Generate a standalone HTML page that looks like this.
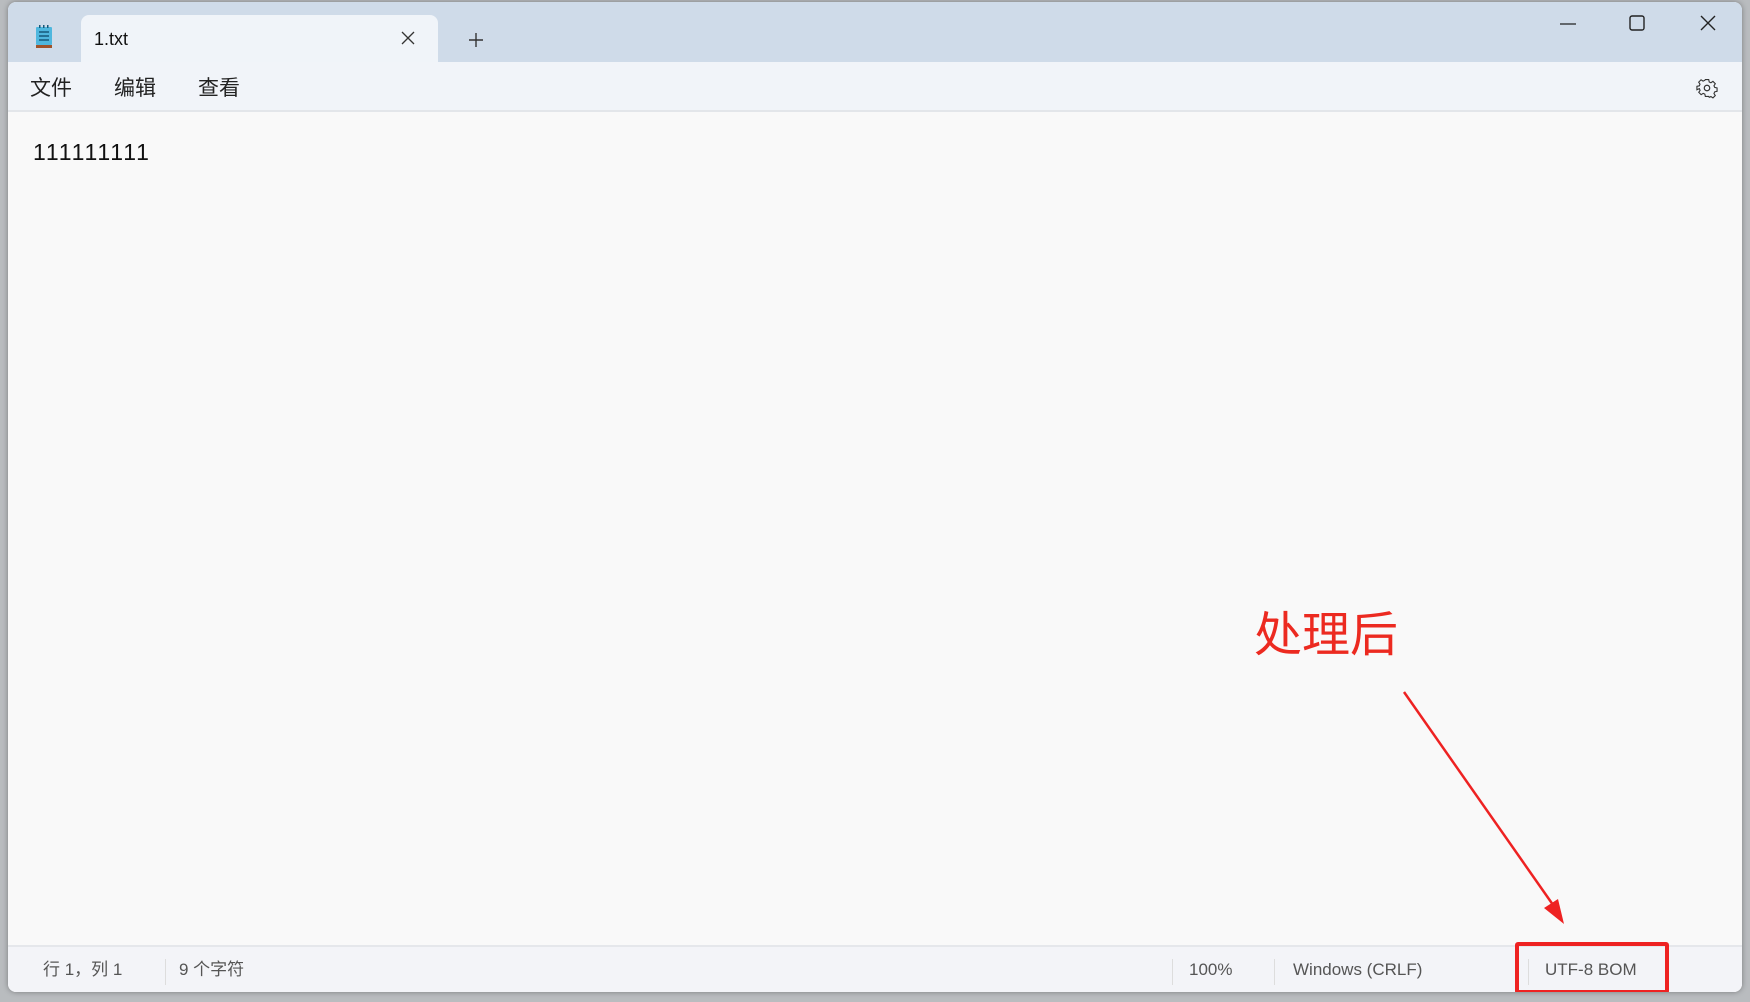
<!DOCTYPE html><html><head><meta charset="utf-8"><style>
body{margin:0;width:1750px;height:1002px;background:#b9bcbf;position:relative;overflow:hidden;font-family:"Segoe UI","Liberation Sans","Noto Sans CJK SC",sans-serif;}
.win{position:absolute;left:8px;top:2px;width:1734px;height:990px;background:#f9f9f9;border-radius:8px;overflow:hidden;box-shadow:0 0 6px rgba(0,0,0,.35);}
.title{position:absolute;left:0;top:0;width:100%;height:60px;background:#cfdbe9;}
.tab{position:absolute;left:73px;top:13px;width:357px;height:47px;background:#f0f4f9;border-radius:8px 8px 0 0;}
.menu{position:absolute;left:0;top:60px;width:100%;height:48px;background:#f1f4f9;border-bottom:2px solid #e3e6ea;}
.status{position:absolute;left:0;top:943px;width:100%;height:47px;background:#f3f4f8;border-top:2px solid #e5e7eb;color:#555;font-size:17px;}
.t{position:absolute;white-space:nowrap;line-height:24px;}
.sep{position:absolute;top:12px;width:1px;height:26px;background:#ddd;}
</style></head><body>
<div class="win">
<div class="title">
<svg style="position:absolute;left:26px;top:22px" width="20" height="26" viewBox="0 0 20 26"><rect x="2" y="3" width="16" height="18" rx="1" fill="#4fb7de"/><rect x="2" y="21" width="16" height="3" fill="#a0532a"/><g stroke="#175a7a" stroke-width="1.6"><line x1="5" y1="8" x2="15" y2="8"/><line x1="5" y1="12" x2="15" y2="12"/><line x1="5" y1="16" x2="15" y2="16"/></g><g fill="#175a7a"><rect x="5" y="1" width="1.5" height="3"/><rect x="9" y="1" width="1.5" height="3"/><rect x="13" y="1" width="1.5" height="3"/></g></svg>
<div class="tab"><div class="t" style="left:13px;top:12px;font-size:18px;color:#111">1.txt</div>
<svg style="position:absolute;left:320px;top:16px" width="14" height="14"><path d="M1 1L13 13M13 1L1 13" stroke="#333" stroke-width="1.3"/></svg></div>
<svg style="position:absolute;left:460px;top:30px" width="16" height="16"><path d="M8 1V15M1 8H15" stroke="#333" stroke-width="1.4"/></svg>
<svg style="position:absolute;left:1552px;top:20px" width="16" height="4"><path d="M0 2H16" stroke="#222" stroke-width="1.3"/></svg>
<svg style="position:absolute;left:1621px;top:13px" width="16" height="16"><rect x="1" y="1" width="14" height="14" rx="2" fill="none" stroke="#222" stroke-width="1.4"/></svg>
<svg style="position:absolute;left:1692px;top:13px" width="16" height="16"><path d="M1 1L15 15M15 1L1 15" stroke="#222" stroke-width="1.4"/></svg>
</div>
<div class="menu">
<div class="t" style="left:22px;top:15px;font-size:21px;color:#222">文件</div>
<div class="t" style="left:106px;top:15px;font-size:21px;color:#222">编辑</div>
<div class="t" style="left:190px;top:15px;font-size:21px;color:#222">查看</div>
<svg style="position:absolute;left:1688px;top:15px" width="22" height="22" viewBox="0 0 24 24"><path d="M10 2h4l.6 2.8 2 .9 2.4-1.6 2.8 2.8-1.6 2.4.9 2 2.8.6v4l-2.8.6-.9 2 1.6 2.4-2.8 2.8-2.4-1.6-2 .9L14 22h-4l-.6-2.8-2-.9-2.4 1.6-2.8-2.8 1.6-2.4-.9-2L0 14v-4l2.8-.6.9-2L2.1 5l2.8-2.8 2.4 1.6 2-.9z" fill="none" stroke="#333" stroke-width="1.3" transform="translate(1 1) scale(.92)"/><circle cx="12" cy="12" r="3" fill="none" stroke="#333" stroke-width="1.3"/></svg>
</div>
<div class="t" style="left:25px;top:138px;font-size:23px;color:#111;letter-spacing:1.8px">111111111</div>
<div class="t" style="left:1246px;top:600px;font-size:48px;line-height:56px;color:#ec2a20;font-family:'Noto Sans CJK SC',sans-serif">处理后</div>
<svg style="position:absolute;left:0;top:0" width="1734" height="990"><line x1="1396" y1="690" x2="1550" y2="910" stroke="#ee2222" stroke-width="2.5"/><path d="M1556 922L1536 906L1550 897Z" fill="#ee2222"/></svg>
<div class="status">
<div class="t" style="left:35px;top:11px">行 1，列 1</div>
<div class="sep" style="left:157px"></div>
<div class="t" style="left:171px;top:11px">9 个字符</div>
<div class="sep" style="left:1164px"></div>
<div class="t" style="left:1181px;top:11px">100%</div>
<div class="sep" style="left:1266px"></div>
<div class="t" style="left:1285px;top:11px">Windows (CRLF)</div>
<div class="sep" style="left:1520px"></div>
<div class="t" style="left:1537px;top:11px">UTF-8 BOM</div>
<div style="position:absolute;left:1507px;top:-5px;width:146px;height:44px;border:4px solid #ee2222;border-radius:3px"></div>
</div>
</div>
</body></html>
